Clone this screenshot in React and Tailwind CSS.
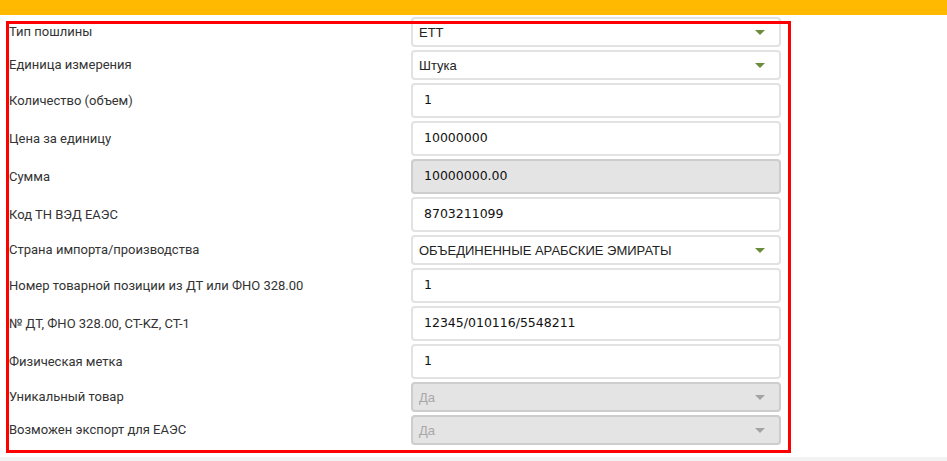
import React from "react";

// Form rows: type decides how the field is drawn
const rows = [
  { label: "Тип пошлины", type: "select", value: "ЕТТ" },
  { label: "Единица измерения", type: "select", value: "Штука" },
  { label: "Количество (объем)", type: "input", value: "1" },
  { label: "Цена за единицу", type: "input", value: "10000000" },
  { label: "Сумма", type: "input", value: "10000000.00", disabled: true },
  { label: "Код ТН ВЭД ЕАЭС", type: "input", value: "8703211099" },
  { label: "Страна импорта/производства", type: "select", value: "ОБЪЕДИНЕННЫЕ АРАБСКИЕ ЭМИРАТЫ" },
  { label: "Номер товарной позиции из ДТ или ФНО 328.00", type: "input", value: "1" },
  { label: "№ ДТ, ФНО 328.00, СТ-KZ, СТ-1", type: "input", value: "12345/010116/5548211" },
  { label: "Физическая метка", type: "input", value: "1" },
  { label: "Уникальный товар", type: "select", value: "Да", disabled: true },
  { label: "Возможен экспорт для ЕАЭС", type: "select", value: "Да", disabled: true },
];

const SelectBox = ({ value, disabled }) => (
  <div
    className={
      disabled
        ? "h-[30px] flex items-center justify-between pl-[6px] pr-[14px] rounded-[4px] border-2 border-[#cdcdcd] bg-[#e4e4e4] text-[#a8a8a8]"
        : "h-[30px] flex items-center justify-between pl-[6px] pr-[14px] rounded-[4px] border-2 border-[#e2e2e2] bg-white text-[#222]"
    }
    style={{ fontFamily: '"Liberation Sans", Arial, sans-serif' }}
  >
    <span className="text-[13px] leading-none">{value}</span>
    <span
      className={
        disabled
          ? "w-0 h-0 border-l-[5px] border-r-[5px] border-t-[5px] border-l-transparent border-r-transparent border-t-[#a3a3a3]"
          : "w-0 h-0 border-l-[5px] border-r-[5px] border-t-[5px] border-l-transparent border-r-transparent border-t-[#6b8c3c]"
      }
    />
  </div>
);

const InputBox = ({ value, disabled }) => (
  <div
    className={
      disabled
        ? "h-[35px] flex items-center px-[11px] rounded-[4px] border-2 border-[#cdcdcd] bg-[#e4e4e4] text-[#111]"
        : "h-[35px] flex items-center px-[11px] rounded-[4px] border-2 border-[#e2e2e2] bg-white text-[#111]"
    }
    style={{ fontFamily: '"DejaVu Sans", Verdana, sans-serif' }}
  >
    <span className="text-[12.5px] leading-none">{value}</span>
  </div>
);

export default function App() {
  return (
    <div
      className="relative w-full h-screen flex flex-col bg-white"
      style={{ fontFamily: "Roboto, sans-serif" }}
    >
      {/* Top yellow strip */}
      <div className="h-[15px] bg-[#ffb900]" />

      {/* Form */}
      <div className="pt-[2px] pl-[9px] flex flex-col gap-[3px]">
        {rows.map((row) => (
          <div key={row.label} className="grid grid-cols-[402px_370px] items-center">
            <span className="text-[13px] text-[#333]">{row.label}</span>
            {row.type === "select" ? (
              <SelectBox value={row.value} disabled={row.disabled} />
            ) : (
              <InputBox value={row.value} disabled={row.disabled} />
            )}
          </div>
        ))}
      </div>

      {/* Bottom grey area */}
      <div className="mt-[12px] flex-1 bg-[#f2f2f2]" />

      {/* Red highlight frame over the form */}
      <div className="absolute left-[6px] top-[21px] w-[785px] h-[432px] border-[3px] border-[#ff0000] pointer-events-none" />
    </div>
  );
}
